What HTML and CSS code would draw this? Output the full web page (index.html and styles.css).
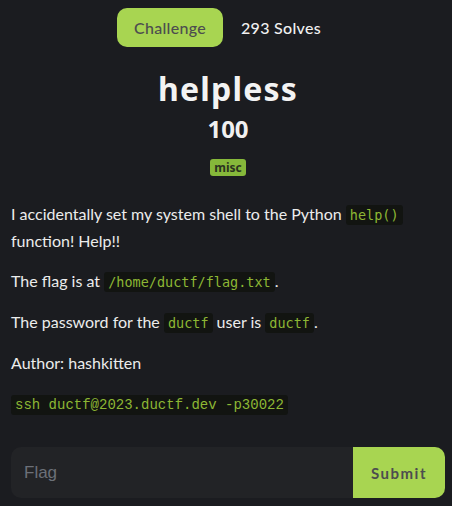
FILE: index.html
```html
<!DOCTYPE html>
<html>
<head>
<meta charset="utf-8">
<link rel="stylesheet" href="styles.css">
</head>
<body>
<div class="page">
  <div class="tabs">
    <span class="pill">Challenge</span>
    <span class="solves">293 Solves</span>
  </div>
  <h1 class="title">helpless</h1>
  <div class="points">100</div>
  <div class="tagrow"><span class="tag">misc</span></div>
  <div class="desc">
    <p>I accidentally set my system shell to the Python <code>help()</code> function! Help!!</p>
    <p>The flag is at <code>/home/ductf/flag.txt</code>.</p>
    <p>The password for the <code>ductf</code> user is <code>ductf</code>.</p>
    <p>Author: hashkitten</p>
    <p><code class="block">ssh ductf@2023.ductf.dev -p30022</code></p>
  </div>
  <form class="flagform">
    <input class="flaginput" type="text" placeholder="Flag">
    <button class="submit" type="button">Submit</button>
  </form>
</div>
</body>
</html>
```
FILE: styles.css
```css
html, body {
  margin: 0;
  padding: 0;
  background: #1b1c20;
}
body {
  font-family: "Lato", "Liberation Sans", sans-serif;
  color: #ececec;
}
.page {
  width: 452px;
  padding: 8px 7px 0 11px;
  box-sizing: border-box;
}
.tabs {
  display: flex;
  justify-content: center;
  align-items: center;
  gap: 18px;
  height: 39px;
  padding-right: 18px;
}
.pill {
  background: #a8d551;
  color: #4d4d4f;
  font-family: "Lato", sans-serif;
  font-size: 16px;
  font-weight: 500;
  letter-spacing: 0.3px;
  height: 39px;
  width: 106px;
  display: flex;
  align-items: center;
  justify-content: center;
  border-radius: 10px;
  box-sizing: border-box;
}
.solves {
  color: #f0f0f0;
  font-size: 16px;
  font-weight: 500;
  letter-spacing: 0.3px;
}
.title {
  margin: 22px 0 0 0;
  text-align: center;
  font-family: "Noto Sans", sans-serif;
  font-weight: 700;
  font-size: 32px;
  line-height: 40px;
  color: #f3f3f3;
  letter-spacing: 1.2px;
}
.points {
  text-align: center;
  font-family: "Noto Sans", sans-serif;
  font-weight: 700;
  font-size: 24px;
  line-height: 30px;
  color: #f0f0f0;
  margin-top: 5px;
}
.tagrow {
  display: flex;
  justify-content: center;
  margin-top: 15px;
}
.tag {
  background: #86b83a;
  color: #2b3320;
  font-family: "Noto Sans", sans-serif;
  font-weight: 700;
  font-size: 12px;
  line-height: 17px;
  height: 17px;
  padding: 0 4px;
  border-radius: 3px;
  display: inline-block;
}
.desc {
  margin-top: 25px;
}
.desc p {
  margin: 0 0 14px 0;
  font-size: 16px;
  line-height: 26px;
}
code {
  font-family: "DejaVu Sans Mono", monospace;
  font-size: 13.5px;
  color: #8db734;
  background: #121411;
  padding: 2px 4px;
  border-radius: 3px;
}
code.block {
  font-family: "Liberation Mono", monospace;
  font-size: 14px;
}
.flagform {
  display: flex;
  margin-top: 29px;
  height: 51px;
}
.flaginput {
  flex: 1;
  background: #222326;
  border: none;
  border-radius: 10px 0 0 10px;
  color: #ddd;
  font-family: "Liberation Sans", sans-serif;
  font-size: 17px;
  padding: 0 13px;
  outline: none;
}
.flaginput::placeholder {
  color: #6c7078;
}
.submit {
  width: 92px;
  background: #a8d551;
  border: none;
  border-radius: 0 10px 10px 0;
  color: #4d4d4f;
  font-family: "Lato", sans-serif;
  font-weight: 700;
  font-size: 15px;
  letter-spacing: 1.5px;
}
```
